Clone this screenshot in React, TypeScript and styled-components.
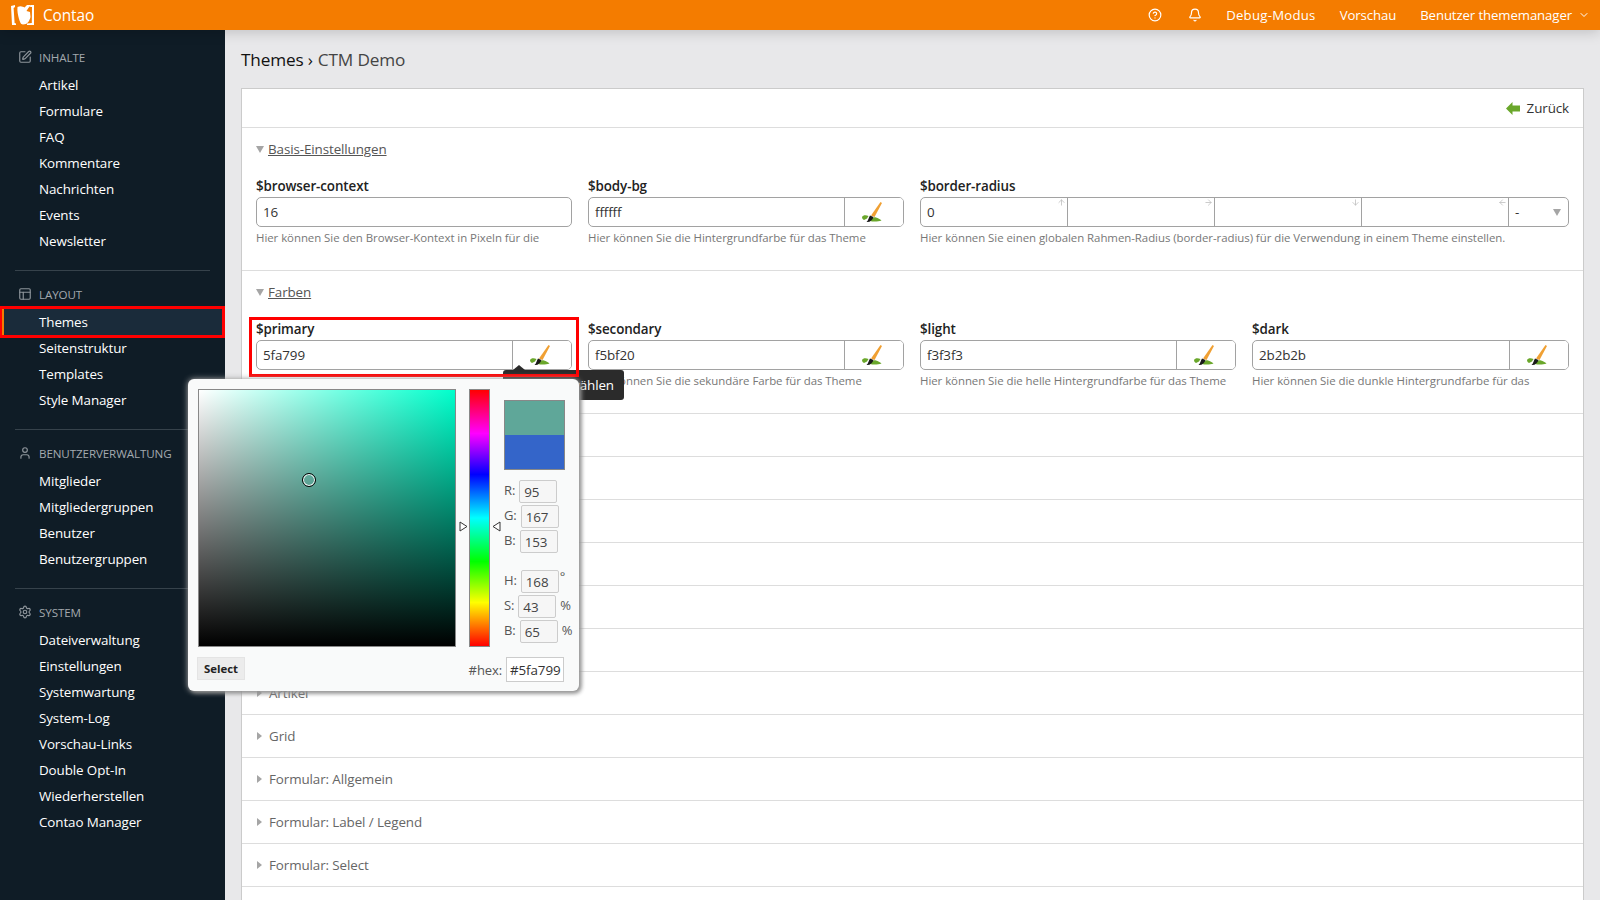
import React from "react"
import styled, { createGlobalStyle } from "styled-components"
import { ArrowDown, ArrowLeft, ArrowRight, ArrowUp, Bell, ChevronDown, CircleHelp, PanelsTopLeft, Settings, SquarePen, User } from "lucide-react"

const FONT = `"Open Sans", "Noto Sans", "Liberation Sans", sans-serif`

const Global = createGlobalStyle`
    html, body {
        margin  : 0;
        height  : 100%;
        overflow: hidden;
    }
    body {
        font-family   : ${FONT};
        font-size     : 13.4px;
        letter-spacing: -0.1px;
        color         : #222;
    }
    * { box-sizing: border-box; }
`

const Page = styled.div`
    display       : flex;
    flex-direction: column;
    height        : 900px;
    overflow      : hidden;
`

const Header = styled.header`
    display    : flex;
    align-items: center;
    flex       : 0 0 30px;
    padding    : 0 10px 0 10px;
    background : #f47c00;
    color      : #fff;
    position   : relative;
    z-index    : 3;
    box-shadow : 0 2px 14px rgba(0, 0, 0, .18);
`

const Brand = styled.div`
    display    : flex;
    align-items: center;
    gap        : 9px;
    font-size  : 15.4px;
    flex       : 1;
`

const TopLink = styled.span<{ $track?: number }>`
    display       : flex;
    align-items   : center;
    gap           : 6px;
    margin-left   : 24px;
    font-weight   : 500;
    font-size     : 13.2px;
    letter-spacing: ${p => p.$track ?? -0.1}px;
`

const TopIcon = styled.span<{ $gap: number }>`
    display    : flex;
    margin-left: ${p => p.$gap}px;
`

const Body = styled.div`
    display   : flex;
    flex      : 1;
    min-height: 0;
`

const Sidebar = styled.nav`
    flex       : 0 0 225px;
    background : #0f1c26;
    padding-top: 12px;
`

const Group = styled.div<{ $last?: boolean }>`
    margin        : 0 15px 8px 15px;
    padding-bottom: 16px;
    border-bottom : ${p => p.$last ? "none" : "1px solid #36424b"};
`

const GroupHead = styled.div`
    display       : flex;
    align-items   : center;
    height        : 30px;
    gap           : 7px;
    padding-left  : 3px;
    color         : #a3a9ae;
    font-size     : 11.6px;
    letter-spacing: -0.1px;
    text-transform: uppercase;

    svg { color: #8d949a; }
`

const NavItem = styled.div<{ $active?: boolean }>`
    position    : relative;
    height      : 26px;
    line-height : 26px;
    margin      : 0 -12px 0 -12px;
    padding-left: 36px;
    color       : #fff;
    background  : ${p => p.$active ? "#1a2b3a" : "transparent"};

    ${p => p.$active && `
        &::before {
            content   : '';
            position  : absolute;
            left      : -1px;
            top       : 0;
            bottom    : 0;
            width     : 2px;
            background: #f47c00;
        }
        &::after {
            content : '';
            position: absolute;
            inset   : -3px;
            border  : 3px solid #f00;
            border-left-width: 2px;
        }
    `}
`

const Main = styled.main`
    flex          : 1;
    min-width     : 0;
    display       : flex;
    flex-direction: column;
    padding       : 0 16px;
    background    : #e8e8ea;
`

const Breadcrumb = styled.h1`
    flex          : 0 0 58px;
    margin        : 0;
    display       : flex;
    align-items   : center;
    font-size     : 17.2px;
    font-weight   : 400;
    letter-spacing: -0.15px;
    color         : #111;

    span { color: #444; margin-left: 5px; }
`

const Card = styled.div`
    flex         : 1;
    background   : #fff;
    border       : 1px solid #cbcbcb;
    border-bottom: none;
`

const BackRow = styled.div`
    display        : flex;
    justify-content: flex-end;
    align-items    : center;
    gap            : 7px;
    height         : 39px;
    padding        : 0 14px 0 0;
    border-bottom  : 1px solid #ddd;
    color          : #333;
`

const Section = styled.section`
    height       : 143px;
    padding      : 12px 15px 0 14px;
    border-bottom: 1px solid #ddd;
`

const Legend = styled.div`
    display    : flex;
    align-items: center;
    gap        : 4px;
    height     : 18px;
    color      : #555;

    span { text-decoration: underline; }
`

const Triangle = styled.i<{ $open?: boolean }>`
    display: block;
    width  : 0;
    height : 0;

    ${p => p.$open ? `
        border-left : 4px solid transparent;
        border-right: 4px solid transparent;
        border-top  : 7px solid #a5a5a5;
    ` : `
        margin-left : 1px;
        border-top   : 4px solid transparent;
        border-bottom: 4px solid transparent;
        border-left  : 5px solid #a5a5a5;
    `}
`

const Fields = styled.div`
    display              : grid;
    grid-template-columns: repeat(3, 316px) 317px;
    gap                  : 16px;
    margin-top           : 18px;
`

const Field = styled.div<{ $wide?: boolean }>`
    position   : relative;
    grid-column: span ${p => p.$wide ? 2 : 1};
`

const Label = styled.label`
    display    : block;
    height     : 21px;
    line-height: 20px;
    font-weight: 600;
    color      : #222;
`

const InputBox = styled.div`
    display      : flex;
    height       : 30px;
    border       : 1px solid #a2a2a2;
    border-radius: 5px;
    background   : #fff;
    overflow     : hidden;
`

const TextInput = styled.input`
    flex          : 1;
    min-width     : 0;
    width         : 100%;
    border        : none;
    outline       : none;
    padding       : 0 6px;
    background    : transparent;
    font-family   : ${FONT};
    font-size     : 13.4px;
    letter-spacing: -0.1px;
    color         : #333;
`

const PickButton = styled.button`
    flex           : 0 0 59px;
    display        : flex;
    align-items    : center;
    justify-content: center;
    padding        : 0 4px 0 0;
    border         : none;
    border-left    : 1px solid #a2a2a2;
    background     : #fff;
`

const TrblCell = styled.div`
    position    : relative;
    flex        : 0 0 147px;
    min-width   : 0;
    display     : flex;
    border-right: 1px solid #a2a2a2;

    svg {
        position: absolute;
        top     : 0;
        right   : 1px;
        color   : #bbb;
    }
`

const UnitSelect = styled.div`
    flex           : 1;
    display        : flex;
    align-items    : center;
    justify-content: space-between;
    padding        : 0 7px 0 6px;
    color          : #333;
`

const Help = styled.p<{ $covered?: boolean }>`
    margin        : ${p => p.$covered ? 7 : 3}px 0 0;
    line-height   : 16px;
    font-size     : 11.45px;
    letter-spacing: -0.05px;
    color         : #777;
    white-space   : nowrap;
`

const FoldRow = styled.div`
    display      : flex;
    align-items  : center;
    gap          : 7px;
    height       : 43px;
    padding-left : 14px;
    border-bottom: 1px solid #ddd;
    color        : #666;
`

/* annotation + popups on top of the $primary field */
const RedFrame = styled.div`
    position      : absolute;
    z-index       : 6;
    left          : -7px;
    top           : -2px;
    width         : 330px;
    height        : 60px;
    border        : 3px solid #f00;
    pointer-events: none;
`

const Tooltip = styled.div`
    position     : absolute;
    z-index      : 5;
    left         : 247px;
    top          : 51px;
    width        : 121px;
    height       : 30px;
    padding-right: 10px;
    border-radius: 3px;
    background   : #2b2b2b;
    color        : #fff;
    line-height  : 31px;
    text-align   : right;

    &::before {
        content      : '';
        position     : absolute;
        left         : 10px;
        top          : -5px;
        border-left  : 6px solid transparent;
        border-right : 6px solid transparent;
        border-bottom: 5px solid #2b2b2b;
    }
`

const Picker = styled.div`
    position     : absolute;
    z-index      : 7;
    left         : -68px;
    top          : 60px;
    width        : 391px;
    height       : 312px;
    padding      : 10px 0 0 10px;
    border-radius: 6px;
    background   : #f9fafa;
    box-shadow   : 0 0 6px #a5a5a5, 2px 2px 4px #808080;
`

const PickerTop = styled.div`
    display: flex;
    height : 258px;
`

const SatBox = styled.div`
    position  : relative;
    flex      : 0 0 258px;
    border    : 1px solid #888;
    background: linear-gradient(to top, #000, rgba(0, 0, 0, 0)), linear-gradient(to right, #fff, #00ffcc);

    &::after {
        content      : '';
        position     : absolute;
        left         : 103px;
        top          : 83px;
        width        : 12px;
        height       : 12px;
        border-radius: 50%;
        border       : 1px solid #000;
        box-shadow   : inset 0 0 0 1px #fff;
    }
`

const HueBar = styled.div`
    position   : relative;
    flex       : 0 0 21px;
    margin     : 0 14px 0 13px;
    border     : 1px solid #888;
    background : linear-gradient(to bottom, #f00, #f0f 17%, #00f 33%, #0ff 50%, #0f0 67%, #ff0 83%, #f00);

    svg { position: absolute; top: 131px; }
`

const Swatches = styled.div`
    display       : flex;
    flex-direction: column;
    width         : 61px;
    height        : 70px;
    margin        : 11px 0 10px;
    border        : 1px solid #888;
`

const Swatch = styled.div<{ $color: string }>`
    flex      : 1;
    background: ${p => p.$color};
`

const PickerSide = styled.div`
    display       : flex;
    flex-direction: column;
    width         : 70px;
`

const ValueRow = styled.div<{ $gap?: number }>`
    display      : flex;
    align-items  : flex-start;
    gap          : 4px;
    height       : 23px;
    margin-bottom: 2px;
    margin-top   : ${p => p.$gap ?? 0}px;
    color        : #555;
    font-size    : 13px;
    line-height  : 20px;
`

const Degree = styled.span`
    margin-left: -3px;
    line-height: 12px;
`

const ValueBox = styled.div`
    width        : 38px;
    height       : 23px;
    padding      : 1px 0 0 4px;
    border       : 1px solid #ccc;
    border-radius: 2px;
    background   : #f6f6f6;
    color        : #444;
    font-size    : 13.4px;
    line-height  : 20px;
`

const PickerBottom = styled.div`
    display        : flex;
    justify-content: space-between;
    align-items    : flex-start;
    width          : 367px;
    margin         : 10px 0 0 -1px;
`

const SelectBtn = styled.button`
    width      : 48px;
    height     : 23px;
    padding    : 0;
    border     : 1px solid #e4e4e4;
    background : #ececec;
    font-family: ${FONT};
    font-size  : 11.4px;
    font-weight: 700;
    color      : #222;
`

const HexWrap = styled.div`
    display    : flex;
    align-items: center;
    gap        : 4px;
    color      : #555;
    font-size  : 13px;
`

const HexBox = styled.div`
    width       : 58px;
    height      : 25px;
    padding-left: 3px;
    border      : 1px solid #ccc;
    background  : #fff;
    color       : #333;
    font-size   : 13.4px;
    line-height : 24px;
`

const Logo = () => (
    <svg width="24" height="22" viewBox="0 0 24 22">
        <path d="M1 2 L5 1 L5 3 L3.6 4 L4.6 19 L6 19.5 L6 21 L2 21 Z" fill="#fff" />
        <path d="M7.5 3 C11 1.5 13 3 14.5 3.5 L17 1 L21 1 C19 3 17.5 5 16.5 7 L20 8 L20.5 13 C19.5 17 17.5 20.5 13 20.5 C10.5 20.5 10 17.5 9 15 C8 11 7 7 7.5 3 Z" fill="#fff" />
        <path d="M20.5 1 L24 1 L24 21 L17 21 L17 19.5 L21.8 19 L22 3 L20 3 Z" fill="#fff" />
    </svg>
)

const Brush = () => (
    <svg width="22" height="21" viewBox="0 0 22 21">
        <path d="M1 15 C2 13 5 13 7.5 14 L6 16.5 L3 18 C2 17.5 1 16.5 1 15 Z" fill="#6aa72b" />
        <path d="M9 19 C11 15.5 13 15 15 15.5 C17 16 19 17 20.5 18.5 C17 19.8 12 19.8 9 19 Z" fill="#6aa72b" />
        <path d="M19.5 0 L21 1 L13.5 15 L10 13.5 Z" fill="#f0a033" />
        <path d="M9 13.5 L12.5 15 C11.5 18 9 20.5 5.5 20 C7.5 18.5 7.5 15.5 9 13.5 Z" fill="#1a1a1a" />
    </svg>
)

const BackArrow = () => (
    <svg width="14" height="13" viewBox="0 0 14 13">
        <path d="M0 6.5 L6.5 0 L6.5 3.5 L14 3.5 L14 9.5 L6.5 9.5 L6.5 13 Z" fill="#6aa72b" />
    </svg>
)

const HueMark = ({ left, flip }: { left: number, flip?: boolean }) => (
    <svg width="9" height="11" viewBox="0 0 9 11" style={{ left }}>
        <path d={flip ? "M8 1 L1 5.5 L8 10 Z" : "M1 1 L8 5.5 L1 10 Z"} fill="#fff" stroke="#333" />
    </svg>
)

const NAV = [
    { title: "Inhalte", icon: <SquarePen size={14} />, items: ["Artikel", "Formulare", "FAQ", "Kommentare", "Nachrichten", "Events", "Newsletter"] },
    { title: "Layout", icon: <PanelsTopLeft size={14} />, items: ["Themes", "Seitenstruktur", "Templates", "Style Manager"] },
    { title: "Benutzerverwaltung", icon: <User size={14} />, items: ["Mitglieder", "Mitgliedergruppen", "Benutzer", "Benutzergruppen"] },
    { title: "System", icon: <Settings size={14} />, items: ["Dateiverwaltung", "Einstellungen", "Systemwartung", "System-Log", "Vorschau-Links", "Double Opt-In", "Wiederherstellen", "Contao Manager"] },
]

const FOLDED = ["Allgemein", "Typografie", "Links", "Buttons", "Navigation", "Tabellen", "Artikel", "Grid", "Formular: Allgemein", "Formular: Label / Legend", "Formular: Select"]

const ColorField = ({ name, value, help, covered, children }: { name: string, value: string, help: string, covered?: boolean, children?: React.ReactNode }) => (
    <Field>
        <Label>{name}</Label>
        <InputBox>
            <TextInput readOnly value={value} />
            <PickButton><Brush /></PickButton>
        </InputBox>
        <Help $covered={covered}>{help}</Help>
        {children}
    </Field>
)

const ColorPicker = () => (
    <Picker>
        <PickerTop>
            <SatBox />
            <HueBar>
                <HueMark left={-11} />
                <HueMark left={22} flip />
            </HueBar>
            <PickerSide>
                <Swatches>
                    <Swatch $color="#5fa799" />
                    <Swatch $color="#3465c9" />
                </Swatches>
                <ValueRow>R:<ValueBox>95</ValueBox></ValueRow>
                <ValueRow>G:<ValueBox>167</ValueBox></ValueRow>
                <ValueRow>B:<ValueBox>153</ValueBox></ValueRow>
                <ValueRow $gap={15}>H:<ValueBox>168</ValueBox><Degree>°</Degree></ValueRow>
                <ValueRow>S:<ValueBox>43</ValueBox>%</ValueRow>
                <ValueRow>B:<ValueBox>65</ValueBox>%</ValueRow>
            </PickerSide>
        </PickerTop>
        <PickerBottom>
            <SelectBtn>Select</SelectBtn>
            <HexWrap>#hex:<HexBox>#5fa799</HexBox></HexWrap>
        </PickerBottom>
    </Picker>
)

export default function App() {
    return (
        <Page>
            <Global />
            <Header>
                <Brand><Logo />Contao</Brand>
                <TopIcon $gap={0}><CircleHelp size={14} /></TopIcon>
                <TopIcon $gap={26}><Bell size={14} /></TopIcon>
                <TopLink $track={0.25}>Debug-Modus</TopLink>
                <TopLink>Vorschau</TopLink>
                <TopLink>Benutzer thememanager <ChevronDown size={12} /></TopLink>
            </Header>
            <Body>
                <Sidebar>
                    {NAV.map((group, i) => (
                        <Group key={group.title} $last={i === NAV.length - 1}>
                            <GroupHead>{group.icon}{group.title}</GroupHead>
                            {group.items.map(item => (
                                <NavItem key={item} $active={item === "Themes"}>{item}</NavItem>
                            ))}
                        </Group>
                    ))}
                </Sidebar>
                <Main>
                    <Breadcrumb>Themes › <span>CTM Demo</span></Breadcrumb>
                    <Card>
                        <BackRow><BackArrow />Zurück</BackRow>
                        <Section>
                            <Legend><Triangle $open /><span>Basis-Einstellungen</span></Legend>
                            <Fields>
                                <Field>
                                    <Label>$browser-context</Label>
                                    <InputBox><TextInput readOnly value="16" /></InputBox>
                                    <Help>Hier können Sie den Browser-Kontext in Pixeln für die</Help>
                                </Field>
                                <ColorField name="$body-bg" value="ffffff" help="Hier können Sie die Hintergrundfarbe für das Theme" />
                                <Field $wide>
                                    <Label>$border-radius</Label>
                                    <InputBox>
                                        <TrblCell><TextInput readOnly value="0" /><ArrowUp size={9} /></TrblCell>
                                        <TrblCell><ArrowRight size={9} /></TrblCell>
                                        <TrblCell><ArrowDown size={9} /></TrblCell>
                                        <TrblCell><ArrowLeft size={9} /></TrblCell>
                                        <UnitSelect>-<Triangle $open /></UnitSelect>
                                    </InputBox>
                                    <Help>Hier können Sie einen globalen Rahmen-Radius (border-radius) für die Verwendung in einem Theme einstellen.</Help>
                                </Field>
                            </Fields>
                        </Section>
                        <Section>
                            <Legend><Triangle $open /><span>Farben</span></Legend>
                            <Fields>
                                <ColorField name="$primary" value="5fa799" help="Hier können Sie die primäre Farbe für das Theme" covered>
                                    <Tooltip>Farbe auswählen</Tooltip>
                                    <RedFrame />
                                    <ColorPicker />
                                </ColorField>
                                <ColorField name="$secondary" value="f5bf20" help="Hier können Sie die sekundäre Farbe für das Theme" />
                                <ColorField name="$light" value="f3f3f3" help="Hier können Sie die helle Hintergrundfarbe für das Theme" />
                                <ColorField name="$dark" value="2b2b2b" help="Hier können Sie die dunkle Hintergrundfarbe für das" />
                            </Fields>
                        </Section>
                        {FOLDED.map(name => (
                            <FoldRow key={name}><Triangle />{name}</FoldRow>
                        ))}
                    </Card>
                </Main>
            </Body>
        </Page>
    )
}
